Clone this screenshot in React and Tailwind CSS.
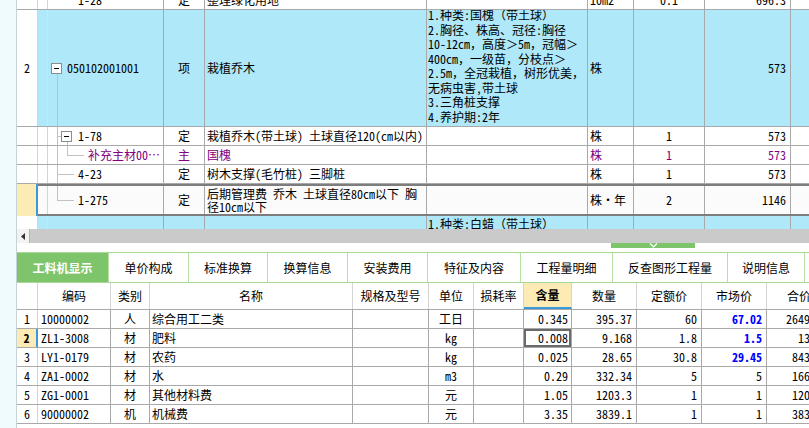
import React from 'react'

const FONT = "font-['Noto_Sans_Mono_CJK_SC','Noto_Sans_CJK_SC',sans-serif]"
const CYAN = 'bg-[#aee8f9]'

function Cell({ w, line = 'border-[#a9a9a9]', className = '', children }) {
  return (
    <div className={`${w} shrink-0 h-full flex items-center overflow-hidden whitespace-nowrap border-r ${line} ${className}`}>
      {children}
    </div>
  )
}

// cells after the code column in the upper grid
function UpperTail({ type, name, feat, unit, qty, price, tone = '' }) {
  return (
    <>
      <Cell w="w-[41px]" className={`justify-center ${tone}`}>{type}</Cell>
      <Cell w="w-[222px]" className={`pl-[2px] ${tone}`}>{name}</Cell>
      <Cell w="w-[161px]" className="pl-[1px]">{feat}</Cell>
      <Cell w="w-[46px]" className={`pl-[2px] ${tone}`}>{unit}</Cell>
      <Cell w="w-[71px]" className={`justify-center ${tone}`}>{qty}</Cell>
      <Cell w="w-[86px]" className={`justify-end pr-[4px] ${tone}`}>{price}</Cell>
      <div className="flex-1" />
    </>
  )
}

const Line = ({ className }) => <span className={`absolute bg-[#c2c2c2] ${className}`} />

const FEATURES = [
  '1.种类:国槐（带土球）',
  '2.胸径、株高、冠径:胸径',
  '10-12cm，高度＞5m，冠幅＞',
  '400cm，一级苗，分枝点＞',
  '2.5m，全冠栽植，树形优美，',
  '无病虫害,带土球',
  '3.三角桩支撑',
  '4.养护期:2年',
]

function UpperGrid() {
  return (
    <div className="h-[229px] overflow-hidden flex flex-col">
      {/* 1-28, cut off at the top */}
      <div className="flex shrink-0 h-[20px] -mt-[10px] border-b border-[#a9a9a9] bg-white">
        <Cell w="w-[21px]" line="border-[#d4d4d4]" />
        <Cell w="w-[10px]" line="border-[#d4d4d4]" />
        <Cell w="w-[116px]" className="pl-[30px]">1-28</Cell>
        <UpperTail type="定" name="整理绿化用地" unit="10m2" qty="0.1" price="696.3" />
      </div>

      {/* 050102001001 */}
      <div className="flex shrink-0 h-[117px] border-b border-[#a9a9a9]">
        <Cell w="w-[21px]" line="border-[#d4d4d4]" className="justify-center bg-white">2</Cell>
        <div className={`flex-1 flex h-full ${CYAN}`}>
          <Cell w="w-[10px]" line="border-[#cfe3ea]" />
          <Cell w="w-[116px]" className="relative pl-[19px]">
            <span className="absolute left-[3px] top-[53px] w-[11px] h-[11px] border border-[#8c8c8c] bg-white flex items-center justify-center">
              <span className="w-[5px] h-px bg-black" />
            </span>
            <Line className="left-[9px] top-[64px] bottom-0 w-px" />
            050102001001
          </Cell>
          <Cell w="w-[41px]" className="justify-center">项</Cell>
          <Cell w="w-[222px]" className="pl-[2px]">栽植乔木</Cell>
          <Cell w="w-[161px]" className="pl-[1px] !items-start">
            <div className="leading-[14.5px] -mt-[2px]">
              {FEATURES.map(t => <div key={t}>{t}</div>)}
            </div>
          </Cell>
          <Cell w="w-[46px]" className="pl-[2px]">株</Cell>
          <Cell w="w-[71px]" />
          <Cell w="w-[86px]" className="justify-end pr-[4px]">573</Cell>
          <div className="flex-1" />
        </div>
      </div>

      {/* 1-78 */}
      <div className="flex shrink-0 h-[19px] border-b border-[#a9a9a9] bg-white">
        <Cell w="w-[21px]" line="border-[#d4d4d4]" />
        <Cell w="w-[10px]" line="border-[#d4d4d4]" />
        <Cell w="w-[116px]" className="relative pl-[30px]">
          <Line className="left-[9px] top-0 bottom-0 w-px" />
          <Line className="left-[9px] top-[9px] w-[4px] h-px" />
          <span className="absolute left-[13px] top-[4px] w-[11px] h-[11px] border border-[#8c8c8c] bg-white flex items-center justify-center">
            <span className="w-[5px] h-px bg-black" />
          </span>
          <Line className="left-[19px] top-[15px] bottom-0 w-px" />
          1-78
        </Cell>
        <UpperTail type="定" name="栽植乔木(带土球) 土球直径120(cm以内)" unit="株" qty="1" price="573" />
      </div>

      {/* 补充主材 */}
      <div className="flex shrink-0 h-[19px] border-b border-[#a9a9a9] bg-white">
        <Cell w="w-[21px]" line="border-[#d4d4d4]" />
        <Cell w="w-[10px]" line="border-[#d4d4d4]" />
        <Cell w="w-[116px]" className="relative pl-[40px] text-[#800080]">
          <Line className="left-[9px] top-0 bottom-0 w-px" />
          <Line className="left-[19px] top-0 h-[9px] w-px" />
          <Line className="left-[19px] top-[9px] w-[17px] h-px" />
          补充主材00…
        </Cell>
        <UpperTail type="主" name="国槐" unit="株" qty="1" price="573" tone="text-[#800080]" />
      </div>

      {/* 4-23 */}
      <div className="flex shrink-0 h-[19px] border-b border-[#a9a9a9] bg-white">
        <Cell w="w-[21px]" line="border-[#d4d4d4]" />
        <Cell w="w-[10px]" line="border-[#d4d4d4]" />
        <Cell w="w-[116px]" className="relative pl-[30px]">
          <Line className="left-[9px] top-0 bottom-0 w-px" />
          <Line className="left-[9px] top-[9px] w-[17px] h-px" />
          4-23
        </Cell>
        <UpperTail type="定" name="树木支撑(毛竹桩) 三脚桩" unit="株" qty="1" price="573" />
      </div>

      {/* 1-275, current row */}
      <div className="flex shrink-0 h-[32px]">
        <div className="w-[21px] shrink-0 h-full bg-[#fdebb6] border-r-2 border-[#3a9ad9]" />
        <div className="flex-1 flex h-full border-y-2 border-[#7d7d7d] bg-[#fbfbfb]">
          <Cell w="w-[10px]" line="border-[#d4d4d4]" />
          <Cell w="w-[116px]" className="relative pl-[30px]">
            <Line className="left-[9px] top-0 h-[14px] w-px" />
            <Line className="left-[9px] top-[14px] w-[17px] h-px" />
            1-275
          </Cell>
          <Cell w="w-[41px]" className="justify-center">定</Cell>
          <Cell w="w-[222px]" className="pl-[2px]">
            <div className="leading-[13px]">
              <div>后期管理费 乔木 土球直径80cm以下 胸</div>
              <div>径10cm以下</div>
            </div>
          </Cell>
          <Cell w="w-[161px]" />
          <Cell w="w-[46px]" className="pl-[2px]">株・年</Cell>
          <Cell w="w-[71px]" className="justify-center">2</Cell>
          <Cell w="w-[86px]" className="justify-end pr-[4px]">1146</Cell>
          <div className="flex-1" />
        </div>
      </div>

      {/* next item, cut off by the scrollbar */}
      <div className="flex shrink-0 h-[40px]">
        <Cell w="w-[21px]" line="border-[#d4d4d4]" className="bg-white" />
        <div className={`flex-1 flex h-full ${CYAN}`}>
          <Cell w="w-[10px]" line="border-[#cfe3ea]" />
          <Cell w="w-[116px]" />
          <Cell w="w-[41px]" />
          <Cell w="w-[222px]" />
          <Cell w="w-[161px]" className="pl-[1px] !items-start">
            <div className="leading-[14.5px] pt-[1px]">1.种类:白蜡（带土球）</div>
          </Cell>
          <Cell w="w-[46px]" />
          <Cell w="w-[71px]" />
          <Cell w="w-[86px]" />
        </div>
      </div>
    </div>
  )
}

const TABS = [
  ['工料机显示', 'w-[92px]'],
  ['单价构成', 'w-[80px]'],
  ['标准换算', 'w-[79px]'],
  ['换算信息', 'w-[80px]'],
  ['安装费用', 'w-[80px]'],
  ['特征及内容', 'w-[93px]'],
  ['工程量明细', 'w-[92px]'],
  ['反查图形工程量', 'w-[115px]'],
  ['说明信息', 'w-[77px]'],
]

// [w, header, align]
const COLS = [
  ['w-[73px]', '编码', 'pl-[3px]'],
  ['w-[39px]', '类别', 'justify-center'],
  ['w-[203px]', '名称', 'pl-[2px]'],
  ['w-[76px]', '规格及型号', 'pl-[2px]'],
  ['w-[45px]', '单位', 'justify-center'],
  ['w-[50px]', '损耗率', 'justify-end pr-[3px]'],
  ['w-[48px]', '含量', 'justify-end pr-[3px]'],
  ['w-[65px]', '数量', 'justify-end pr-[4px]'],
  ['w-[65px]', '定额价', 'justify-end pr-[4px]'],
  ['w-[65px]', '市场价', 'justify-end pr-[4px]'],
  ['w-[65px]', '合价', 'justify-end pr-[3px]'],
]

const ROWS = [
  ['1', '10000002', '人', '综合用工二类', '', '工日', '', '0.345', '395.37', '60', '67.02', '26497.7'],
  ['2', 'ZL1-3008', '材', '肥料', '', 'kg', '', '0.008', '9.168', '1.8', '1.5', '13.75'],
  ['3', 'LY1-0179', '材', '农药', '', 'kg', '', '0.025', '28.65', '30.8', '29.45', '843.74'],
  ['4', 'ZA1-0002', '材', '水', '', 'm3', '', '0.29', '332.34', '5', '5', '1661.7'],
  ['5', 'ZG1-0001', '材', '其他材料费', '', '元', '', '1.05', '1203.3', '1', '1', '1203.3'],
  ['6', '90000002', '机', '机械费', '', '元', '', '3.35', '3839.1', '1', '1', '3839.1'],
]

function LowerGrid() {
  return (
    <div className="flex flex-col">
      <div className="flex shrink-0 h-[27px] border-b border-[#a9a9a9]">
        <Cell w="w-[21px]" line="border-[#d4d4d4]" />
        {COLS.map(([w, label]) =>
          label === '含量' ? (
            <Cell key={label} w={w} line="border-[#d4d4d4]" className="justify-center font-bold bg-[#fdebb6] border-b-2 !border-b-[#3a9ad9]">{label}</Cell>
          ) : (
            <Cell key={label} w={w} line="border-[#d4d4d4]" className="justify-center">{label}</Cell>
          )
        )}
      </div>
      {ROWS.map(r => {
        const cur = r[0] === '2'
        const blue = r[9] !== r[10]
        return (
          <div key={r[0]} className="flex shrink-0 h-[19px] border-b border-[#a9a9a9]">
            {cur ? (
              <div className="w-[21px] shrink-0 h-full flex items-center justify-center font-bold bg-[#fdebb6] border-r-2 border-[#3a9ad9]">{r[0]}</div>
            ) : (
              <Cell w="w-[21px]" line="border-[#d4d4d4]" className="justify-center">{r[0]}</Cell>
            )}
            {COLS.map(([w, label, align], i) => {
              let extra = ''
              if (label === '市场价' && blue) extra = 'font-bold text-[#0000ff]'
              if (label === '含量' && cur) extra = 'shadow-[inset_0_0_0_2px_#6a6a6a]'
              return (
                <Cell key={label} w={w} className={`${align} ${extra}`}>{r[i + 1]}</Cell>
              )
            })}
          </div>
        )
      })}
    </div>
  )
}

export default function App() {
  return (
    <div className={`${FONT} text-[12px] text-black w-[809px] h-[428px] overflow-hidden flex bg-white`}>
      <div className="w-[17px] shrink-0 h-full bg-[#f0fbfd] border-r border-[#c6d2d6]" />
      <div className="flex-1 min-w-0 flex flex-col">
        <UpperGrid />

        {/* horizontal scrollbar */}
        <div className="h-[14px] shrink-0 flex bg-[#cacaca]">
          <div className="w-[13px] h-full bg-[#f2f2f2] border-r border-[#b5b5b5] flex items-center justify-center">
            <svg width="4" height="7" viewBox="0 0 4 7"><path d="M4 0 L0 3.5 L4 7 Z" fill="#333" /></svg>
          </div>
        </div>

        {/* splitter */}
        <div className="h-[9px] shrink-0 flex items-start pl-[594px]">
          <div className="w-[84px] h-[5px] bg-[#7ec46b] flex items-center justify-center">
            <svg width="9" height="5" viewBox="0 0 9 5"><path d="M1 0.5 L4.5 4 L8 0.5" stroke="#fff" strokeWidth="1.2" fill="none" /></svg>
          </div>
        </div>

        {/* tabs */}
        <div className="h-[31px] shrink-0 flex border-y border-[#a9d996]">
          {TABS.map(([t, w], i) => (
            <div key={t} className={`${w} shrink-0 h-full flex items-center justify-center border-r border-[#b4e0a2] ${i === 0 ? 'bg-[#7ec46b] text-white font-bold' : 'bg-white'}`}>
              {t}
            </div>
          ))}
        </div>

        <LowerGrid />
      </div>
    </div>
  )
}
